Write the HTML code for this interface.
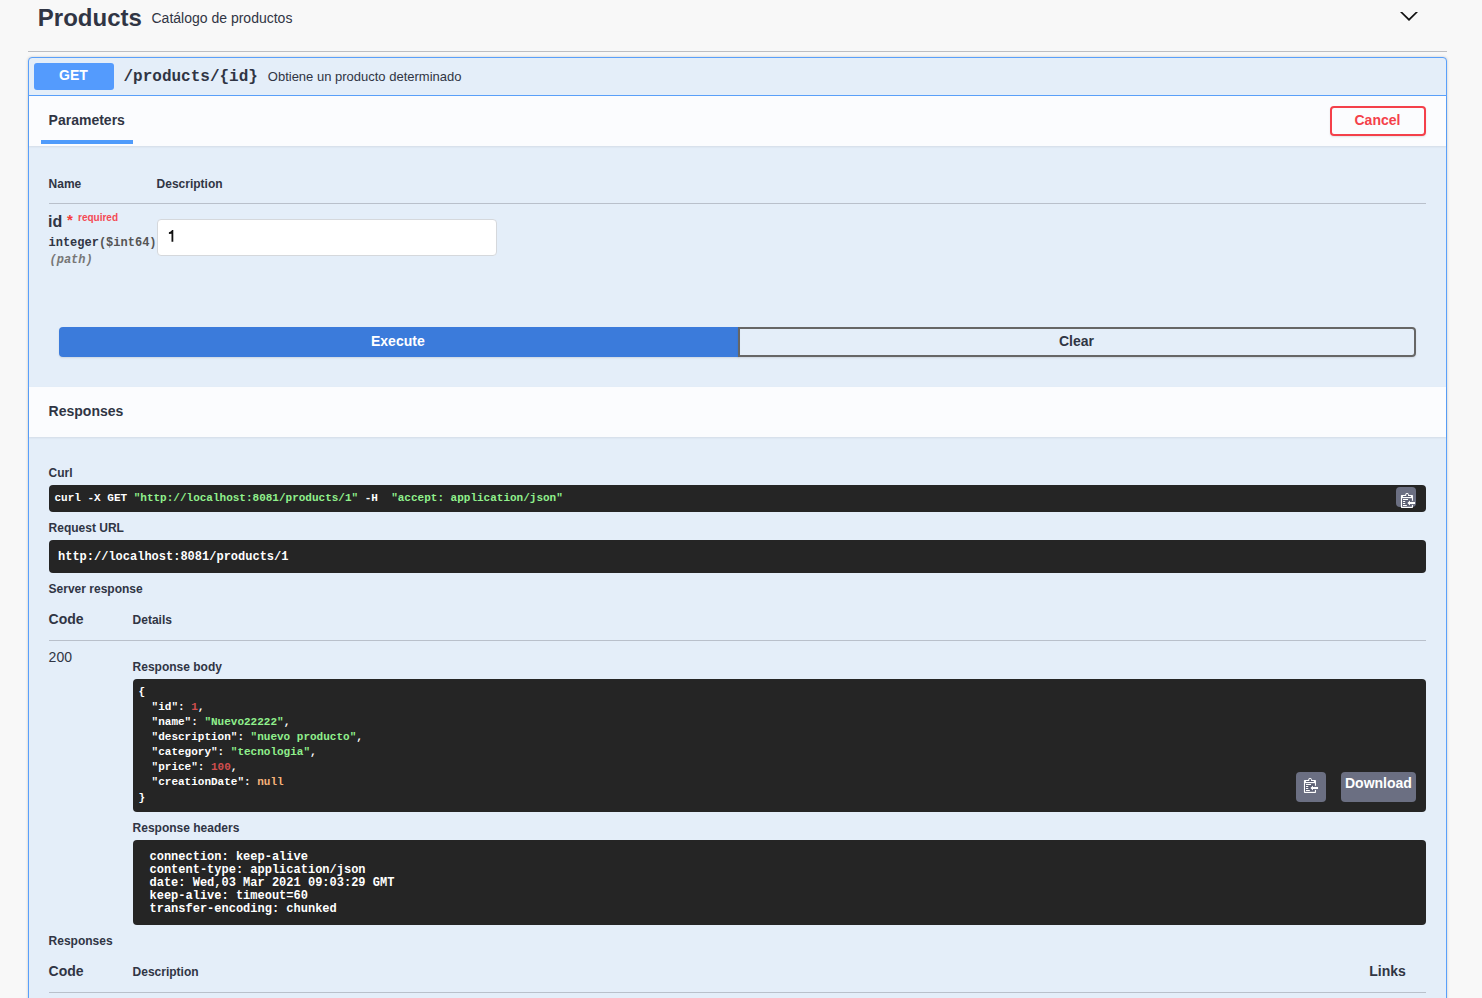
<!DOCTYPE html>
<html><head><meta charset="utf-8"><style>
html,body{margin:0;padding:0;}
body{width:1482px;height:998px;overflow:hidden;background:#f8f8f8;position:relative;font-family:'Liberation Sans', sans-serif;}
.t{position:absolute;white-space:pre;}
.r{position:absolute;}
</style></head><body>
<div class="t" style="left:37.8px;top:5.5px;font: bold 24px/24px 'Liberation Sans', sans-serif;color:#303544;">Products</div>
<div class="t" style="left:151.5px;top:11.0px;font: normal 14px/14px 'Liberation Sans', sans-serif;color:#303544;">Cat&aacute;logo de productos</div>
<svg class="r" style="left:1398px;top:8px" width="22" height="16" viewBox="0 0 22 16"><path d="M2 3.9 H4.3 L11 10.6 L17.7 3.9 H20 L11 12.9 Z" fill="#111"/></svg>
<div class="r" style="left:28px;top:51px;width:1419px;height:1px;background:#bdbec2"></div>
<div class="r" style="left:28px;top:57px;width:1419px;height:1043px;background:#e4eef9;border:1px solid #5aa0fa;border-radius:4px;box-sizing:border-box;box-shadow:0 0 3px rgba(0,0,0,.19)"></div>
<div class="r" style="left:29px;top:95px;width:1417px;height:1px;background:#5aa0fa"></div>
<div class="r" style="left:34px;top:63px;width:80px;height:27px;background:#549bfd;border-radius:3px"></div>
<div class="t" style="left:59px;top:68.0px;font: bold 14px/14px 'Liberation Sans', sans-serif;color:#fff;">GET</div>
<div class="t" style="left:123.5px;top:69.0px;font: bold 16px/16px 'Liberation Mono', monospace;color:#303544;">/products/{id}</div>
<div class="t" style="left:267.8px;top:70.0px;font: normal 13px/13px 'Liberation Sans', sans-serif;color:#303544;">Obtiene un producto determinado</div>
<div class="r" style="left:29px;top:96px;width:1417px;height:50px;background:#fbfcfe;box-shadow:0 1px 2px rgba(0,0,0,.08)"></div>
<div class="t" style="left:48.6px;top:113.0px;font: bold 14px/14px 'Liberation Sans', sans-serif;color:#303544;">Parameters</div>
<div class="r" style="left:41px;top:140px;width:92px;height:4px;background:#4f9bfb"></div>
<div class="r" style="left:1330px;top:106px;width:96px;height:30px;border:2px solid #f4404a;border-radius:4px;box-sizing:border-box;background:transparent;box-shadow:0 1px 2px rgba(0,0,0,.1)"></div>
<div class="t" style="left:1354.5px;top:113.0px;font: bold 14px/14px 'Liberation Sans', sans-serif;color:#f4404a;">Cancel</div>
<div class="t" style="left:48.6px;top:178.0px;font: bold 12px/12px 'Liberation Sans', sans-serif;color:#303544;">Name</div>
<div class="t" style="left:156.6px;top:178.0px;font: bold 12px/12px 'Liberation Sans', sans-serif;color:#303544;">Description</div>
<div class="r" style="left:49px;top:203px;width:1377px;height:1px;background:#b9c0cb"></div>
<div class="t" style="left:48px;top:213.5px;font: bold 16px/16px 'Liberation Sans', sans-serif;color:#303544;">id</div>
<div class="t" style="left:67px;top:212.3px;font: bold 15px/15px 'Liberation Sans', sans-serif;color:#f53b3b;">*</div>
<div class="t" style="left:78px;top:212.5px;font: bold 10px/10px 'Liberation Sans', sans-serif;color:#f44a55;">required</div>
<div class="t" style="left:48.5px;top:237.0px;font: bold 12px/12px 'Liberation Mono', monospace;color:#303544;">integer<span style="color:#555">($int64)</span></div>
<div class="t" style="left:49.5px;top:254.0px;font:italic bold 12px/12px 'Liberation Mono', monospace;color:#777;">(path)</div>
<div class="r" style="left:157px;top:219px;width:340px;height:37px;background:#fff;border:1px solid #d5d8dc;border-radius:4px;box-sizing:border-box"></div>
<svg class="r" style="left:164px;top:226px" width="16" height="20" viewBox="0 0 16 20"><path d="M7.5 15.8 V7.7 L4.9 7.9 V6.3 Q7 5.7 8.1 4 H9.3 V15.8 Z" fill="#111"/></svg>
<div class="r" style="left:59px;top:327px;width:680px;height:30px;background:#3b7bdb;border-radius:4px 0 0 4px;box-shadow:0 1px 2px rgba(0,0,0,.1)"></div>
<div class="t" style="left:371px;top:334.0px;font: bold 14px/14px 'Liberation Sans', sans-serif;color:#fff;">Execute</div>
<div class="r" style="left:738px;top:327px;width:678px;height:30px;border:2px solid #666;border-radius:0 4px 4px 0;box-sizing:border-box;box-shadow:0 1px 2px rgba(0,0,0,.1)"></div>
<div class="t" style="left:1059px;top:334.0px;font: bold 14px/14px 'Liberation Sans', sans-serif;color:#303544;">Clear</div>
<div class="r" style="left:29px;top:387px;width:1417px;height:50px;background:#fbfcfe;box-shadow:0 1px 2px rgba(0,0,0,.08)"></div>
<div class="t" style="left:48.6px;top:404.0px;font: bold 14px/14px 'Liberation Sans', sans-serif;color:#303544;">Responses</div>
<div class="t" style="left:48.6px;top:467.0px;font: bold 12px/12px 'Liberation Sans', sans-serif;color:#303544;">Curl</div>
<div class="r" style="left:49px;top:485px;width:1377px;height:27px;background:#252525;border-radius:4px"></div>
<div class="t" style="left:54.5px;top:492.5px;font: bold 11px/11px 'Liberation Mono', monospace;color:#fff;">curl -X GET <span style="color:#90f08c">"http://localhost:8081/products/1"</span> -H  <span style="color:#90f08c">"accept: application/json"</span></div>
<div class="r" style="left:1396px;top:487px;width:20px;height:20px;background:#6b6f82;border-radius:4px"></div>
<svg class="r" style="left:1396.9px;top:489.1px;overflow:visible" width="22" height="22" viewBox="0 0 22 22">
<rect x="3.94" y="6" width="12.03" height="13" rx="0.7" fill="#fff"/>
<path d="M7.95 6.2 L8.7 4.4 Q8.95 3.94 9.5 3.94 H10.55 Q11.1 3.94 11.35 4.4 L12.08 6.2 Z" fill="#fff"/>
<rect x="9.29" y="5.16" width="1.71" height="2.2" fill="#5b5f73"/>
<rect x="5.77" y="6.98" width="8.26" height="0.97" rx="0.48" fill="#5b5f73"/>
<rect x="5.04" y="9.17" width="9.84" height="8.61" fill="#5b5f73"/>
<rect x="14.6" y="11.8" width="1.6" height="4.15" fill="#6b6f82"/>
<rect x="5.89" y="9.96" width="5.16" height="1.09" rx="0.3" fill="#fff"/>
<rect x="5.89" y="12.07" width="2.43" height="0.85" rx="0.3" fill="#fff"/>
<rect x="5.89" y="14.0" width="2.43" height="0.98" rx="0.3" fill="#fff"/>
<rect x="5.89" y="15.95" width="4.0" height="1.1" rx="0.3" fill="#fff"/>
<path d="M10.4 14 L13 11.5 V12.9 H18.04 V15 H13 V16.6 Z" fill="#fff"/>
</svg>
<div class="t" style="left:48.6px;top:522.0px;font: bold 12px/12px 'Liberation Sans', sans-serif;color:#303544;">Request URL</div>
<div class="r" style="left:49px;top:540px;width:1377px;height:33px;background:#252525;border-radius:4px"></div>
<div class="t" style="left:58px;top:551.0px;font: bold 12px/12px 'Liberation Mono', monospace;color:#fff;">http://localhost:8081/products/1</div>
<div class="t" style="left:48.6px;top:583.0px;font: bold 12px/12px 'Liberation Sans', sans-serif;color:#303544;">Server response</div>
<div class="t" style="left:48.6px;top:612.0px;font: bold 14px/14px 'Liberation Sans', sans-serif;color:#303544;">Code</div>
<div class="t" style="left:132.6px;top:614.0px;font: bold 12px/12px 'Liberation Sans', sans-serif;color:#303544;">Details</div>
<div class="r" style="left:49px;top:640px;width:1377px;height:1px;background:#b9c0cb"></div>
<div class="t" style="left:48.6px;top:650.0px;font: normal 14px/14px 'Liberation Sans', sans-serif;color:#303544;">200</div>
<div class="t" style="left:132.6px;top:661.0px;font: bold 12px/12px 'Liberation Sans', sans-serif;color:#303544;">Response body</div>
<div class="r" style="left:133px;top:679px;width:1293px;height:133px;background:#252525;border-radius:4px"></div>
<div class="t" style="left:138.4px;top:686.5px;font: bold 11px/11px 'Liberation Mono', monospace;color:#fff;">{</div>
<div class="t" style="left:138.4px;top:701.65px;font: bold 11px/11px 'Liberation Mono', monospace;color:#fff;">  "id": <span style="color:#d14e4e">1</span>,</div>
<div class="t" style="left:138.4px;top:716.8px;font: bold 11px/11px 'Liberation Mono', monospace;color:#fff;">  "name": <span style="color:#90f08c">"Nuevo22222"</span>,</div>
<div class="t" style="left:138.4px;top:731.95px;font: bold 11px/11px 'Liberation Mono', monospace;color:#fff;">  "description": <span style="color:#90f08c">"nuevo producto"</span>,</div>
<div class="t" style="left:138.4px;top:747.1px;font: bold 11px/11px 'Liberation Mono', monospace;color:#fff;">  "category": <span style="color:#90f08c">"tecnologia"</span>,</div>
<div class="t" style="left:138.4px;top:762.25px;font: bold 11px/11px 'Liberation Mono', monospace;color:#fff;">  "price": <span style="color:#d14e4e">100</span>,</div>
<div class="t" style="left:138.4px;top:777.4px;font: bold 11px/11px 'Liberation Mono', monospace;color:#fff;">  "creationDate": <span style="color:#f5b27a">null</span></div>
<div class="t" style="left:138.4px;top:792.55px;font: bold 11px/11px 'Liberation Mono', monospace;color:#fff;">}</div>
<div class="r" style="left:1296px;top:772px;width:30px;height:30px;background:#6b6f82;border-radius:4px"></div>
<svg class="r" style="left:1300px;top:774px;overflow:visible" width="22" height="22" viewBox="0 0 22 22">
<rect x="3.94" y="6" width="12.03" height="13" rx="0.7" fill="#fff"/>
<path d="M7.95 6.2 L8.7 4.4 Q8.95 3.94 9.5 3.94 H10.55 Q11.1 3.94 11.35 4.4 L12.08 6.2 Z" fill="#fff"/>
<rect x="9.29" y="5.16" width="1.71" height="2.2" fill="#5b5f73"/>
<rect x="5.77" y="6.98" width="8.26" height="0.97" rx="0.48" fill="#5b5f73"/>
<rect x="5.04" y="9.17" width="9.84" height="8.61" fill="#5b5f73"/>
<rect x="14.6" y="11.8" width="1.6" height="4.15" fill="#6b6f82"/>
<rect x="5.89" y="9.96" width="5.16" height="1.09" rx="0.3" fill="#fff"/>
<rect x="5.89" y="12.07" width="2.43" height="0.85" rx="0.3" fill="#fff"/>
<rect x="5.89" y="14.0" width="2.43" height="0.98" rx="0.3" fill="#fff"/>
<rect x="5.89" y="15.95" width="4.0" height="1.1" rx="0.3" fill="#fff"/>
<path d="M10.4 14 L13 11.5 V12.9 H18.04 V15 H13 V16.6 Z" fill="#fff"/>
</svg>
<div class="r" style="left:1341px;top:772px;width:75px;height:30px;background:#6b6f82;border-radius:4px"></div>
<div class="t" style="left:1345px;top:776.0px;font: bold 14px/14px 'Liberation Sans', sans-serif;color:#fff;">Download</div>
<div class="t" style="left:132.6px;top:822.0px;font: bold 12px/12px 'Liberation Sans', sans-serif;color:#303544;">Response headers</div>
<div class="r" style="left:133px;top:840px;width:1293px;height:85px;background:#252525;border-radius:4px"></div>
<div class="t" style="left:149.5px;top:851.0px;font: bold 12px/12px 'Liberation Mono', monospace;color:#fff;">connection: keep-alive</div>
<div class="t" style="left:149.5px;top:864.0px;font: bold 12px/12px 'Liberation Mono', monospace;color:#fff;">content-type: application/json</div>
<div class="t" style="left:149.5px;top:877.0px;font: bold 12px/12px 'Liberation Mono', monospace;color:#fff;">date: Wed,03 Mar 2021 09:03:29 GMT</div>
<div class="t" style="left:149.5px;top:890.0px;font: bold 12px/12px 'Liberation Mono', monospace;color:#fff;">keep-alive: timeout=60</div>
<div class="t" style="left:149.5px;top:903.0px;font: bold 12px/12px 'Liberation Mono', monospace;color:#fff;">transfer-encoding: chunked</div>
<div class="t" style="left:48.6px;top:935.0px;font: bold 12px/12px 'Liberation Sans', sans-serif;color:#303544;">Responses</div>
<div class="t" style="left:48.6px;top:964.0px;font: bold 14px/14px 'Liberation Sans', sans-serif;color:#303544;">Code</div>
<div class="t" style="left:132.6px;top:966.0px;font: bold 12px/12px 'Liberation Sans', sans-serif;color:#303544;">Description</div>
<div class="t" style="left:1369.3px;top:964.0px;font: bold 14px/14px 'Liberation Sans', sans-serif;color:#303544;">Links</div>
<div class="r" style="left:49px;top:992px;width:1377px;height:1px;background:#b9c0cb"></div>
</body></html>
